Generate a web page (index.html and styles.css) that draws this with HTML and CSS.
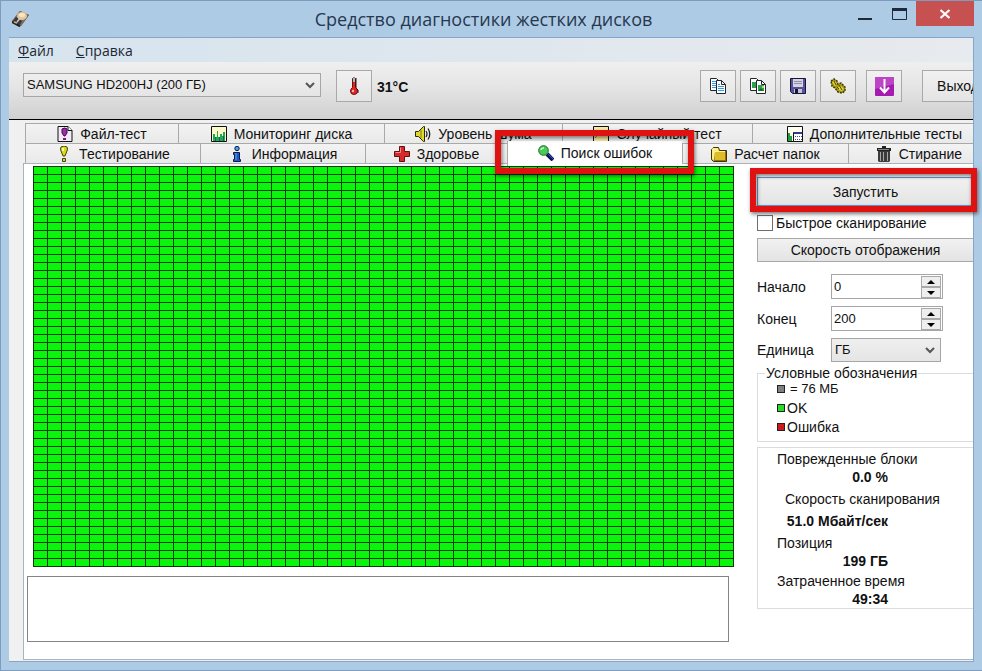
FILE: index.html
```html
<!DOCTYPE html>
<html lang="ru">
<head>
<meta charset="utf-8">
<title>Средство диагностики жестких дисков</title>
<link rel="stylesheet" href="styles.css">
</head>
<body>
<div class="window">
  <header class="titlebar">
    <svg class="app-icon" viewBox="0 0 20 18" aria-hidden="true">
      <path d="M1 11 9 1l9 4-8 11-2 1-7-4z" fill="#4a4642"/>
      <path d="M1 11 9 1l9 4-8 11z" fill="#7d6f60"/>
      <path d="m2 11 3-4 6 4-2 4z" fill="#3a3a3c"/>
      <path d="m1 11 8 4v2l-8-4z" fill="#1d2028"/>
      <ellipse cx="11" cy="6" rx="5" ry="4" fill="#e9c795"/>
      <ellipse cx="11" cy="5" rx="3" ry="2" fill="#f8e6c4"/>
      <path d="m6 12 4-5" stroke="#c9cdd4" stroke-width="1.5"/>
      <path d="m3 12 3 1" stroke="#d8b468" stroke-width="1.5"/>
    </svg>
    <h1 class="title">Средство диагностики жестких дисков</h1>
    <div class="caption-buttons">
      <button class="caption" aria-label="Свернуть"><svg viewBox="0 0 14 2"><path d="M0 0h14v2H0z" fill="#1c2a3c"/></svg></button>
      <button class="caption" aria-label="Развернуть"><svg viewBox="0 0 15 12"><path d="M.5 1v10.500h14V1" fill="none" stroke="#1c2a3c"/><path d="M0 0h15v3H0z" fill="#1c2a3c"/></svg></button>
      <button class="caption caption-close" aria-label="Закрыть"><svg viewBox="0 0 12 10"><path d="m1.500 1 9 8m0-8-9 8" stroke="#fff" stroke-width="2.200"/></svg></button>
    </div>
  </header>

  <main class="client">
    <nav class="menu">
      <a href="#file"><u>Ф</u>айл</a>
      <a href="#help"><u>С</u>правка</a>
    </nav>

    <div class="toolbar">
      <select class="combo drive" aria-label="Диск"><option>SAMSUNG HD200HJ (200 ГБ)</option></select>
      <button class="tool" aria-label="Температура">
        <svg class="icon-tall" viewBox="0 0 10 18"><path d="M3.500 1.500q1.500-1.500 3 0v9q2 1.500 2 3.500a3.500 3.500 0 0 1-7 0q0-2 2-3.500z" fill="#e8221c" stroke="#651512"/><path d="M4 1h2v4H4z" fill="#8ac8c0"/><path d="M7 1v10l2 2v3" fill="none" stroke="#3d1010"/><circle cx="4" cy="14" r="1.200" fill="#ffb4a8"/></svg>
      </button>
      <output class="temperature">31°C</output>
      <div class="tool-group">
        <button class="tool" aria-label="Копировать текст">
          <svg viewBox="0 0 16 16"><path d="M.5.5h6l2 2v10h-8z" fill="#fff" stroke="#20242c"/><path d="M2 3.500h4M2 5.500h4M2 7.500h4M2 9.500h4" stroke="#3a98dc"/><path d="M6.500 2.500h5l4 4v9h-9z" fill="#fff" stroke="#20242c"/><path d="M11.500 2.500v4h4" fill="none" stroke="#20242c"/><path d="M8 6.500h2M8 8.500h6M8 10.500h6M8 12.500h6" stroke="#3a98dc"/></svg>
        </button>
        <button class="tool" aria-label="Копировать снимок">
          <svg viewBox="0 0 16 16"><path d="M.5.5h6l2 2v10h-8z" fill="#fff" stroke="#20242c"/><path d="M2 4h4v6H2z" fill="#31a04c"/><path d="M6.500 2.500h5l4 4v9h-9z" fill="#fff" stroke="#20242c"/><path d="M11.500 2.500v4h4" fill="none" stroke="#20242c"/><path d="M8 7h6v6H8z" fill="#31a04c"/><path d="m8 13 3-3 3 3z" fill="#176a2b"/><path d="M12 8h2v2h-2z" fill="#a8e36e"/></svg>
        </button>
        <button class="tool" aria-label="Сохранить">
          <svg viewBox="0 0 16 16"><path d="M.5.5h15v15h-13l-2-2z" fill="#55519a" stroke="#16163a"/><path d="M3 1h10v8H3z" fill="#d4d4e2"/><path d="M4 3.500h8M4 5.500h8" stroke="#8e8ea4"/><path d="M4 11h8v4H4z" fill="#c4c4d4"/><path d="M5 11h3v4H5z" fill="#16163a"/></svg>
        </button>
        <button class="tool" aria-label="Настройки">
          <svg viewBox="0 0 16 16"><path d="m1 3 3-2 3 2 1 3 3-1 4 4v4l-3 2-4-1-3-4-3-2z" fill="#a99b12" stroke="#3c3802" stroke-width="1.500" stroke-dasharray="2 1"/><path d="m2 4 3-1 2 3-2 2zM8 9l3-1 3 3-2 2-3-1z" fill="#e4d63a"/><path d="m4 3 2 4m3 0 3 5m-5-3 2 2" stroke="#4d4804"/></svg>
        </button>
        <button class="tool tool-down" aria-label="Загрузить обновление">
          <svg class="icon-large" viewBox="0 0 19 19"><rect width="19" height="19" rx="1" fill="#a51ab0"/><path d="M0 1 1 0h17l1 1v6L0 12z" fill="#bb45c5"/><path d="M9.500 2v13M5 10.500l4.500 5 4.500-5" fill="none" stroke="#fff" stroke-width="2"/></svg>
        </button>
        <button class="exit">Выход</button>
      </div>
    </div>

    <div class="tabs">
      <div class="tab-row tab-row-back">
        <button class="tab"><svg viewBox="0 0 16 16"><path d="M1 .5h10l4 4v11H1z" fill="#f4e9f6" stroke="#111"/><path d="M11 .5v4h4" fill="#fff" stroke="#111"/><path d="M5 3q3-2 5 0v4l-2 3H7L5 7z" fill="#a02ab0" stroke="#3c0a48"/><path d="M6 12h3v2H6z" fill="#7c1a88"/></svg>Файл-тест</button>
        <button class="tab"><svg viewBox="0 0 16 16"><path d="M.5.5h15v15H.5z" fill="#fdf9c8" stroke="#111"/><path d="M2 15V8h2v3h2V5h1v6h2V8h2v2h1V6h2v9z" fill="#23a852"/><path d="M4 15v-4h1v4m3 0v-4h1v4m3 0v-5h1v5" fill="#087060"/></svg>Мониторинг диска</button>
        <button class="tab"><svg viewBox="0 0 16 16"><path d="M.5 5.500h3l5-5h1v15h-1l-5-5h-3z" fill="#ded830" stroke="#2c2a04"/><path d="M6 4v8" stroke="#807a10"/><path d="M11 5q2 3 0 6M13 2.500q3.500 5.500 0 11" fill="none" stroke="#222" stroke-width="1.300"/></svg>Уровень шума</button>
        <button class="tab"><svg viewBox="0 0 16 16"><path d="M.5.5h15v15H.5z" fill="#fbe9a4" stroke="#111"/><path d="m2 12 3-4 2 2 3-5 2 3 2-4" fill="none" stroke="#b07018"/></svg>Случайный тест</button>
        <button class="tab"><svg viewBox="0 0 16 16"><path d="M.5.5h15v15H.5z" fill="#fdfdf0" stroke="#111"/><path d="M1 15V7h2v3h2v5z" fill="#20a03c"/><path d="M6.500 6.500h9v9h-9z" fill="#fff" stroke="#111"/><path d="M7 6h8v2H7z" fill="#3a3a8c"/><path d="M8 10.500h7M8 13.500h7" stroke="#444c9c" stroke-dasharray="1 1"/></svg>Дополнительные тесты</button>
      </div>
      <div class="tab-row tab-row-front">
        <button class="tab"><svg viewBox="0 0 16 16"><path d="M5 1q3-2 6 0 1 2 0 4L9 10H7L5 5Q4 3 5 1z" fill="#d8d820" stroke="#45450a"/><path d="M6 2h2v3H6z" fill="#fafaa0"/><path d="M6.500 12.500h3v3h-3z" fill="#d8d820" stroke="#45450a"/></svg>Тестирование</button>
        <button class="tab"><svg viewBox="0 0 16 16"><circle cx="8" cy="2.500" r="2.200" fill="#4f9cec" stroke="#0b1c48"/><path d="M4.500 6.500h6v7h1v2h-7v-2h1v-5h-1z" fill="#1858cc" stroke="#0b1c48"/><path d="M7 7v7" stroke="#63a6f4"/></svg>Информация</button>
        <button class="tab"><svg viewBox="0 0 16 16"><path d="M5.500.5h5v5h5v5h-5v5h-5v-5h-5v-5h5z" fill="#d8282c" stroke="#5c1012"/><path d="M6.500 6.500v-5m-5 5h5" stroke="#f48a84"/></svg>Здоровье</button>
        <div class="tab-slot">
          <button class="tab tab-active"><svg viewBox="0 0 16 16"><path d="m9 9 6 6" stroke="#0b125c" stroke-width="4"/><path d="m10 9 5 5" stroke="#3450d4"/><circle cx="5.500" cy="5.500" r="4.800" fill="#48cc54" stroke="#176a2c"/><path d="M3 5q0-2 3-2" fill="none" stroke="#c4f8bc" stroke-width="1.500"/></svg>Поиск ошибок</button>
        </div>
        <button class="tab"><svg viewBox="0 0 16 16"><path d="M.5 3.500v10l2 2h13v-11h-7l-1-3h-5z" fill="#8a7410" stroke="#3c3204"/><path d="M1 3q0-1 2-1h4l1 3h6v1H4l-1 9-2-2z" fill="#fbf08c"/><path d="M4 6h10v8H4z" fill="#e0bc28"/></svg>Расчет папок</button>
        <button class="tab"><svg viewBox="0 0 16 16"><path d="M1 2h5V0h4v2h5v3H1z" fill="#222"/><path d="M2 5h12v10l-1 1H3l-1-1z" fill="#3c3c3c"/><path d="M4.500 6v9M7.500 6v9M11.500 6v9" stroke="#a8a8a8"/><path d="M2 3.500h11" stroke="#888"/></svg>Стирание</button>
      </div>
    </div>

    <section class="page">
      <div class="scan">
        <div class="block-map" role="img" aria-label="Карта блоков"></div>
        <textarea class="log" readonly aria-label="Журнал"></textarea>
      </div>

      <aside class="side">
        <div class="start-slot"><button class="button start">Запустить</button></div>
        <label class="check"><input type="checkbox">Быстрое сканирование</label>
        <button class="button speed">Скорость отображения</button>

        <div class="fields">
          <label for="from">Начало</label>
          <div class="spin"><input id="from" type="text" value="0"><button aria-label="Начало: больше"><svg viewBox="0 0 8 4"><path d="m0 4 4-4 4 4z"/></svg></button><button aria-label="Начало: меньше"><svg viewBox="0 0 8 4"><path d="m0 0 4 4 4-4z"/></svg></button></div>
          <label for="to">Конец</label>
          <div class="spin"><input id="to" type="text" value="200"><button aria-label="Конец: больше"><svg viewBox="0 0 8 4"><path d="m0 4 4-4 4 4z"/></svg></button><button aria-label="Конец: меньше"><svg viewBox="0 0 8 4"><path d="m0 0 4 4 4-4z"/></svg></button></div>
          <label for="unit">Единица</label>
          <select class="combo" id="unit"><option>ГБ</option></select>
        </div>

        <fieldset class="legend">
          <legend>Условные обозначения</legend>
          <ul>
            <li class="block-size"><i class="swatch swatch-size"></i>= 76 МБ</li>
            <li><i class="swatch swatch-ok"></i>OK</li>
            <li><i class="swatch swatch-bad"></i>Ошибка</li>
          </ul>
        </fieldset>

        <dl class="stats">
          <div><dt>Поврежденные блоки</dt><dd>0.0 %</dd></div>
          <div class="stat-speed"><dt>Скорость сканирования</dt><dd>51.0 Мбайт/сек</dd></div>
          <div><dt>Позиция</dt><dd>199 ГБ</dd></div>
          <div><dt>Затраченное время</dt><dd>49:34</dd></div>
        </dl>
      </aside>
    </section>
  </main>
</div>
</body>
</html>
```
FILE: styles.css
```css
* {
  box-sizing: border-box;
}

body {
  margin: 0;
  color: #111;
  font: 14px/20px "Liberation Sans", Arial, sans-serif;
}

button,
input,
select,
textarea {
  margin: 0;
  padding: 0;
  color: inherit;
  font: inherit;
}

svg {
  display: block;
  flex: none;
}

/* Window frame */
.window {
  display: flex;
  flex-direction: column;
  min-height: 100vh;
  padding: 0 8px 8px;
  background: #aecbe6;
  border: 1px solid #7e9cbe;
  border-right: 0;
}

.titlebar {
  display: flex;
  align-items: center;
  height: 36px;
}

.app-icon {
  width: 20px;
  height: 18px;
  margin-left: 2px;
}

.title {
  flex: 1;
  margin: 0 0 0 88px;
  color: #26384e;
  font: 18px/24px "Open Sans", "Noto Sans", sans-serif;
  text-align: center;
  white-space: nowrap;
}

.caption-buttons {
  display: flex;
  align-self: flex-start;
}

.caption {
  display: flex;
  align-items: center;
  justify-content: center;
  width: 34px;
  height: 25px;
  background: none;
  border: 0;
}

.caption:first-child svg {
  width: 14px;
  height: 2px;
  margin-top: 10px;
}

.caption:nth-child(2) svg {
  width: 15px;
  height: 12px;
}

.caption-close {
  width: 58px;
  background: #c75050;
}

.caption-close svg {
  width: 12px;
  height: 10px;
}

.client {
  display: flex;
  flex: 1;
  flex-direction: column;
  background: #f0f0f0;
  border: 1px solid #86a6c8;
  border-width: 1px 1px 1px 0;
}

.menu {
  display: flex;
  gap: 22px;
  height: 24px;
  padding-left: 9px;
  background: linear-gradient(90deg, #d6e4ee, #e7eaee);
  font: 14px/26px "Open Sans", "Noto Sans", sans-serif;
}

.menu a {
  color: #1c2733;
  text-decoration: none;
}

/* Toolbar */
.toolbar {
  display: flex;
  align-items: flex-start;
  height: 58px;
  padding: 8px 0 0 14px;
  overflow: hidden;
  background: linear-gradient(#efefef, #e6e6e6 40%, #d0d0d0);
  border-bottom: 1px solid #000;
}

.combo {
  height: 24px;
  padding: 0 3px;
  appearance: none;
  border: 1px solid #a6a6a6;
  border-radius: 0;
  background: url("data:image/svg+xml,%3Csvg xmlns='http://www.w3.org/2000/svg' width='10' height='7'%3E%3Cpath d='m1 1 4 4 4-4' fill='none' stroke='%23555' stroke-width='2'/%3E%3C/svg%3E") right 5px center no-repeat, linear-gradient(#efefef, #e5e5e5);
  font-size: 13px;
}

.drive {
  width: 298px;
  margin: 3px 15px 0 0;
}

.tool,
.exit {
  display: flex;
  flex: none;
  align-items: center;
  justify-content: center;
  width: 36px;
  height: 32px;
  background: linear-gradient(#f1f1f1, #e4e4e4);
  border: 1px solid #a9a9a9;
}

.tool svg {
  width: 16px;
  height: 16px;
}

.tool .icon-tall {
  width: 10px;
  height: 18px;
}

.tool .icon-large {
  width: 19px;
  height: 19px;
}

.temperature {
  margin-left: 5px;
  font-weight: bold;
  line-height: 34px;
}

.tool-group {
  display: flex;
  flex: none;
  gap: 4px;
  width: 273px;
  margin-left: auto;
}

.tool-down {
  margin-left: 6px;
}

.exit {
  width: 72px;
  margin-left: 16px;
}

/* Tabs */
.tabs {
  padding: 3px 0 0 16px;
}

.tab-row {
  display: grid;
  height: 20px;
}

.tab-row-back {
  grid-template-columns: 153fr 206fr 178fr 190fr 221fr;
}

.tab-row-front {
  grid-template-columns: 175fr 165fr 142fr 175fr 166fr 125fr;
}

.tab {
  display: flex;
  align-items: center;
  justify-content: center;
  gap: 7px;
  height: 20px;
  min-width: 0;
  padding: 0;
  background: linear-gradient(#f3f3f3, #e9e9e9);
  border: 0 solid #a9a9a9;
  border-top-width: 1px;
  border-left-width: 1px;
  white-space: nowrap;
}

.tab svg {
  width: 16px;
  height: 16px;
}

.tab-row > .tab:last-child {
  justify-content: flex-end;
  padding-right: 11px;
}

.tab-slot,
.start-slot {
  position: relative;
}

.tab-active {
  position: absolute;
  inset: -2px 0 auto;
  z-index: 1;
  height: 25px;
  padding-bottom: 2px;
  background: #fff;
  border-top-width: 0;
}

/* Red highlight frames */
.tab-slot::after,
.start-slot::after {
  position: absolute;
  z-index: 2;
  border: 6px solid #df1111;
  box-shadow: 1px 2px 4px #0008, inset 1px 2px 4px #0008;
  content: "";
  pointer-events: none;
}

.tab-slot::after {
  inset: -13px -12px -11px;
}

.start-slot::after {
  inset: -9px -4px -6px -7px;
}

/* Page */
.page {
  display: grid;
  flex: 1;
  grid-template-columns: 1fr 216px;
  gap: 23px;
  margin: 0 0 1px 14px;
  background: #fff;
  border: 1px solid #a9b4ba;
  border-right: 0;
}

.scan {
  display: flex;
  flex-direction: column;
  gap: 9px;
  padding: 2px 0 0 3px;
}

.block-map {
  height: 401px;
  margin-left: 6px;
  background:
    repeating-linear-gradient(90deg, #043a04 0 1px, transparent 1px 14px),
    repeating-linear-gradient(#043a04 0 1px, #0bf40b 1px 8px);
}

.log {
  height: 66px;
  margin-right: 5px;
  background: #fff;
  border: 1px solid #83838a;
  resize: none;
}

.side {
  padding-top: 13px;
}

.button {
  display: block;
  width: 100%;
  height: 24px;
  background: linear-gradient(#f1f1f1, #e4e4e4);
  border: 1px solid #a9a9a9;
  border-right: 0;
}

.start {
  height: 29px;
  border-color: #5f9bd6;
}

.check {
  display: flex;
  align-items: center;
  gap: 3px;
  height: 16px;
  margin: 9px 0 7px;
}

.check input {
  width: 16px;
  height: 16px;
  appearance: none;
  background: #fff;
  border: 1px solid #6e6e6e;
}

.fields {
  display: grid;
  grid-template-columns: 74px 112px;
  row-gap: 7px;
  align-items: center;
  margin-top: 12px;
}

.fields .combo {
  width: 110px;
}

.spin {
  display: grid;
  grid-template-columns: 1fr 20px;
  grid-template-rows: 11px 11px;
  height: 25px;
  padding: 1px 1px 0 0;
  border: 1px solid #a6a6a6;
  font-size: 13px;
}

.spin input {
  grid-row: 1 / 3;
  min-width: 0;
  padding-left: 2px;
  background: none;
  border: 0;
}

.spin button {
  display: flex;
  align-items: center;
  justify-content: center;
  background: #eee;
  border: 1px solid #a9a9a9;
}

.spin svg {
  width: 8px;
  height: 4px;
}

.legend {
  min-width: 0;
  margin: 1px 0 5px;
  padding: 0 0 5px 19px;
  border: 1px solid #dcdcdc;
  border-right: 0;
}

.legend legend {
  margin-left: -12px;
  padding: 0 1px;
}

.legend ul {
  display: grid;
  gap: 1px;
  margin: -3px 0 0;
  padding: 0;
  line-height: 18px;
  list-style: none;
}

.legend li {
  display: flex;
  align-items: center;
  gap: 2px;
}

.block-size {
  font-size: 13px;
}

.swatch {
  width: 8px;
  height: 8px;
  border: 1px solid #222;
}

.swatch-size {
  margin-right: 3px;
  background: #808080;
}

.swatch-ok {
  background: #22dd22;
}

.swatch-bad {
  background: #d01818;
}

.stats {
  display: grid;
  gap: 2px;
  margin: 0;
  padding: 2px 0 0 19px;
  border: 1px solid #dcdcdc;
  border-right: 0;
  line-height: 18px;
}

.stats dd {
  width: 111px;
  margin: 0;
  font-weight: bold;
  text-align: right;
  white-space: nowrap;
}

.stat-speed {
  line-height: 22px;
}

.stat-speed dt {
  padding-left: 8px;
}
```
